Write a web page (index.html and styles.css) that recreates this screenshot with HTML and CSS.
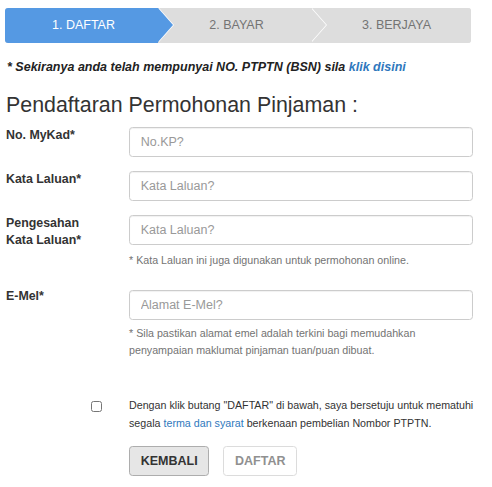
FILE: index.html
```html
<!DOCTYPE html>
<html lang="ms">
<head>
<meta charset="utf-8">
<title>Pendaftaran Permohonan Pinjaman</title>
<link rel="stylesheet" href="styles.css">
</head>
<body>
<div class="page">
  <div class="steps">
    <div class="step step--active step--one">1. DAFTAR</div>
    <div class="step step--two">2. BAYAR</div>
    <div class="step step--three">3. BERJAYA</div>
  </div>

  <p class="note">* Sekiranya anda telah mempunyai NO. PTPTN (BSN) sila <a href="#" class="link">klik disini</a></p>

  <h3 class="title">Pendaftaran Permohonan Pinjaman :</h3>

  <form class="form">
    <div class="row">
      <label class="label">No. MyKad*</label>
      <div class="control"><input class="input" type="text" placeholder="No.KP?"></div>
    </div>
    <div class="row row--gap">
      <label class="label">Kata Laluan*</label>
      <div class="control"><input class="input" type="password" placeholder="Kata Laluan?"></div>
    </div>
    <div class="row row--gap">
      <label class="label">Pengesahan<br>Kata Laluan*</label>
      <div class="control">
        <input class="input" type="password" placeholder="Kata Laluan?">
        <p class="help">* Kata Laluan ini juga digunakan untuk permohonan online.</p>
      </div>
    </div>
    <div class="row row--email">
      <label class="label label--raised">E-Mel*</label>
      <div class="control">
        <input class="input" type="text" placeholder="Alamat E-Mel?">
        <p class="help help--tight">* Sila pastikan alamat emel adalah terkini bagi memudahkan<br>penyampaian maklumat pinjaman tuan/puan dibuat.</p>
      </div>
    </div>
    <div class="row row--agree">
      <div class="label label--check"><input class="check" type="checkbox"></div>
      <div class="control">
        <p class="agree">Dengan klik butang "DAFTAR" di bawah, saya bersetuju untuk mematuhi<br>segala <a href="#" class="link link--plain">terma dan syarat</a> berkenaan pembelian Nombor PTPTN.</p>
        <div class="buttons">
          <button type="button" class="btn btn--back">KEMBALI</button>
          <button type="button" class="btn btn--disabled">DAFTAR</button>
        </div>
      </div>
    </div>
  </form>
</div>
</body>
</html>
```

FILE: styles.css
```css
html, body {
  margin: 0;
  padding: 0;
  background: #ffffff;
}

body {
  font-family: "Liberation Sans", Arial, sans-serif;
  color: #333333;
}

.page {
  padding: 8px 19px 0 6px;
}

/* ---- progress steps ---- */
.steps {
  display: flex;
  height: 35px;
  margin: 0 2px 0 -1px;
  border-radius: 3px;
  overflow: hidden;
  background: #dddddd;
}

.step {
  position: relative;
  flex: 1 1 0;
  height: 35px;
  line-height: 35px;
  font-size: 12.5px;
  text-align: center;
  color: #747474;
  background: #dddddd;
}

.step--active {
  background: #5599e3;
  color: #ffffff;
}

.step--one { padding-left: 4px; }
.step--two { padding-left: 4px; }
.step--three { padding-left: 11px; }

.step--one::before,
.step--two::before {
  content: "";
  position: absolute;
  top: 0;
  right: -16px;
  width: 0;
  height: 0;
  border-top: 17.5px solid transparent;
  border-bottom: 17.5px solid transparent;
  border-left: 15px solid #ffffff;
  z-index: 2;
}

.step--one::after,
.step--two::after {
  content: "";
  position: absolute;
  top: 0;
  right: -15px;
  width: 0;
  height: 0;
  border-top: 17.5px solid transparent;
  border-bottom: 17.5px solid transparent;
  border-left: 15px solid #dddddd;
  z-index: 3;
}

.step--one::after {
  border-left-color: #5599e3;
}

/* ---- note & title ---- */
.note {
  margin: 16px 0 0 1px;
  font-size: 12.5px;
  line-height: 17.8px;
  font-weight: bold;
  font-style: italic;
  color: #222222;
}

.link {
  color: #2f78bd;
  text-decoration: none;
}

.link--plain {
  font-weight: normal;
}

.title {
  margin: 17.5px 0 0 0;
  font-size: 21.4px;
  line-height: 23.5px;
  font-weight: normal;
  color: #333333;
}

/* ---- form ---- */
.form {
  margin-top: 9.3px;
}

.row {
  display: flex;
  align-items: flex-start;
}

.row--gap {
  margin-top: 14px;
}

.row--email {
  margin-top: 21px;
}

.row--agree {
  margin-top: 38px;
}

.label {
  flex: 0 0 123px;
  width: 123px;
  font-size: 12.4px;
  line-height: 17px;
  font-weight: bold;
  color: #333333;
}

.label--raised {
  margin-top: -1.5px;
}

.label--check {
  display: flex;
  padding: 4px 0 0 85px;
  box-sizing: border-box;
}

.control {
  flex: 1 1 auto;
  min-width: 0;
}

.input {
  display: block;
  box-sizing: border-box;
  width: 100%;
  height: 30px;
  margin: 0;
  padding: 0 10.7px;
  border: 1px solid #cccccc;
  border-radius: 3.5px;
  background: #ffffff;
  font-family: "Liberation Sans", Arial, sans-serif;
  font-size: 12.5px;
  color: #555555;
  box-shadow: inset 0 1px 1px rgba(0, 0, 0, 0.06);
}

.input::placeholder {
  color: #999999;
}

.help {
  margin: 6.5px 0 0 0;
  font-size: 10.7px;
  line-height: 17.3px;
  color: #737373;
  white-space: nowrap;
}

.help--tight {
  margin-top: 5px;
}

.check {
  width: 11px;
  height: 11px;
  margin: 0;
}

.agree {
  margin: 0;
  font-size: 10.7px;
  line-height: 17.3px;
  color: #333333;
  white-space: nowrap;
}

.buttons {
  display: flex;
  gap: 14px;
  margin-top: 13.5px;
}

.btn {
  box-sizing: border-box;
  height: 30px;
  padding: 0 10.7px;
  border-radius: 3.5px;
  font-family: "Liberation Sans", Arial, sans-serif;
  font-size: 12.5px;
  font-weight: bold;
}

.btn--back {
  background: #e6e6e6;
  border: 1px solid #adadad;
  color: #333333;
}

.btn--disabled {
  background: #ffffff;
  border: 1px solid #dcdcdc;
  color: #909090;
}
```
